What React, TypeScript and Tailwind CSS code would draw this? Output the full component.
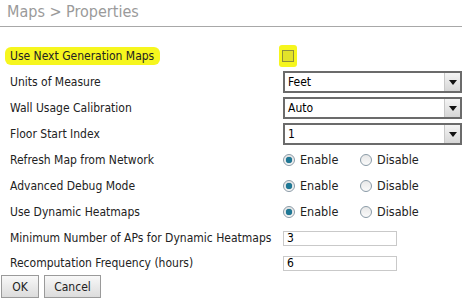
import React from "react"

const font = { fontFamily: '"DejaVu Sans Condensed", "DejaVu Sans", sans-serif' }

function Select({ value }: { value: string }) {
  return (
    <div className="flex h-[22px] w-[179px] items-center border-2 border-[#6b6b6b] bg-white">
      <span className="flex-1 pl-[3px] text-[12px] text-black">{value}</span>
      <span className="flex h-[18px] w-[16px] items-center justify-center border-l border-[#c8c8c8] bg-gradient-to-b from-[#f4f4f4] to-[#d6d6d6]">
        <svg width="8" height="5" viewBox="0 0 8 5">
          <path d="M0 0h8L4 5z" fill="#111" />
        </svg>
      </span>
    </div>
  )
}

function Radio({ on }: { on?: boolean }) {
  return (
    <span className="flex h-[12px] w-[12px] items-center justify-center rounded-full border border-[#8a9aa6] bg-gradient-to-b from-[#e8e8e8] to-[#fafafa]">
      {on && <span className="h-[6px] w-[6px] rounded-full bg-[#1d7896] shadow-[0_0_1px_#0a4f66]" />}
    </span>
  )
}

function RadioPair() {
  return (
    <div className="flex items-center text-[12.5px] text-[#222]">
      <Radio on />
      <span className="ml-[5px] w-[60px]">Enable</span>
      <Radio />
      <span className="ml-[5px]">Disable</span>
    </div>
  )
}

function Text({ value }: { value: string }) {
  return (
    <div className="flex h-[15px] w-[114px] items-center border border-[#c9c9c9] bg-white pl-[3px] text-[12px] text-black">
      {value}
    </div>
  )
}

function Row({ label, children, last }: { label: React.ReactNode; children?: React.ReactNode; last?: boolean }) {
  return (
    <div className={`flex items-center ${last ? "h-[24px]" : "h-[26px]"}`}>
      <div className="w-[283px] pl-[10px] text-[12px] text-[#222]">{label}</div>
      {children}
    </div>
  )
}

export default function App() {
  return (
    <div className="h-[304px] w-[467px] bg-white" style={font}>

      {/* Title */}
      <div className="mr-[5px] flex h-[27px] items-center border-b border-[#a8a8a8] pb-[2px] pl-[7px] text-[16px] text-[#9a9a9a]">
        Maps &gt; Properties
      </div>

      <div className="pt-[16px]">

        <Row
          label={
            <span className="-ml-[5px] rounded-[6px] bg-[#f6f61e] py-[2px] pl-[5px] pr-[6px]">
              Use Next Generation Maps
            </span>
          }
        >
          <span className="-ml-[4px] flex h-[22px] w-[18px] items-center justify-center rounded-[3px] bg-[#f6f61e]">
            <span className="h-[12px] w-[12px] border border-[#8e8e3a] bg-[#e2e22a]" />
          </span>
        </Row>

        <Row label="Units of Measure"><Select value="Feet" /></Row>
        <Row label="Wall Usage Calibration"><Select value="Auto" /></Row>
        <Row label="Floor Start Index"><Select value="1" /></Row>
        <Row label="Refresh Map from Network"><RadioPair /></Row>
        <Row label="Advanced Debug Mode"><RadioPair /></Row>
        <Row label="Use Dynamic Heatmaps"><RadioPair /></Row>
        <Row label="Minimum Number of APs for Dynamic Heatmaps"><Text value="3" /></Row>
        <Row label="Recomputation Frequency (hours)" last><Text value="6" /></Row>

        <div className="flex gap-[5px] pl-[1px]">
          <button className="h-[23px] w-[38px] border border-[#9a9a9a] bg-gradient-to-b from-[#f8f8f8] to-[#dcdcdc] text-[12px] text-[#222]">
            OK
          </button>
          <button className="h-[23px] w-[57px] border border-[#9a9a9a] bg-gradient-to-b from-[#f8f8f8] to-[#dcdcdc] text-[12px] text-[#222]">
            Cancel
          </button>
        </div>

      </div>
    </div>
  )
}
